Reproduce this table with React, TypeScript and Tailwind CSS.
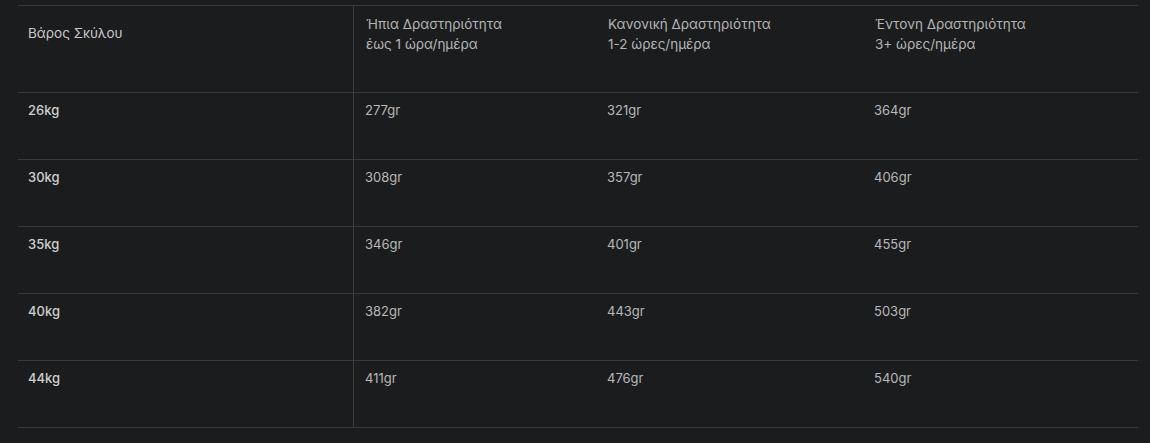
import React from "react";

const rows = [
  ["26kg", "277gr", "321gr", "364gr"],
  ["30kg", "308gr", "357gr", "406gr"],
  ["35kg", "346gr", "401gr", "455gr"],
  ["40kg", "382gr", "443gr", "503gr"],
  ["44kg", "411gr", "476gr", "540gr"],
];

const grid = "grid grid-cols-[336px_242px_267px_275px] border-b border-[#3a3b3d]";

export default function App() {
  return (
    <div
      className="w-[1150px] h-[443px] bg-[#1b1c1e] pt-[5px] pl-[18px] text-[13px] leading-[20px]"
      style={{ fontFamily: "Inter, 'Noto Sans', sans-serif" }}
    >
      <div className="w-[1120px] border-t border-[#3a3b3d]">
        <div className={`${grid} h-[87px] text-[13.5px]`}>
          <div className="border-r border-[#3a3b3d] pl-[10px] pt-[17px] text-[#c9c9c9]">Βάρος Σκύλου</div>
          <div className="pl-[12px] pt-[8px] text-[#b5b5b5]">
            <div>Ήπια Δραστηριότητα</div>
            <div>έως 1 ώρα/ημέρα</div>
          </div>
          <div className="pl-[12px] pt-[8px] text-[#b5b5b5]">
            <div>Κανονική Δραστηριότητα</div>
            <div>1-2 ώρες/ημέρα</div>
          </div>
          <div className="pl-[12px] pt-[8px] text-[#b5b5b5]">
            <div>Έντονη Δραστηριότητα</div>
            <div>3+ ώρες/ημέρα</div>
          </div>
        </div>
        {rows.map((r) => (
          <div key={r[0]} className={`${grid} h-[67px]`}>
            <div className="border-r border-[#3a3b3d] pl-[10px] pt-[7px] font-medium text-[#cfcfcf]">{r[0]}</div>
            <div className="pl-[11px] pt-[7px] text-[#b8b8b8]">{r[1]}</div>
            <div className="pl-[11px] pt-[7px] text-[#b8b8b8]">{r[2]}</div>
            <div className="pl-[11px] pt-[7px] text-[#b8b8b8]">{r[3]}</div>
          </div>
        ))}
      </div>
    </div>
  );
}
